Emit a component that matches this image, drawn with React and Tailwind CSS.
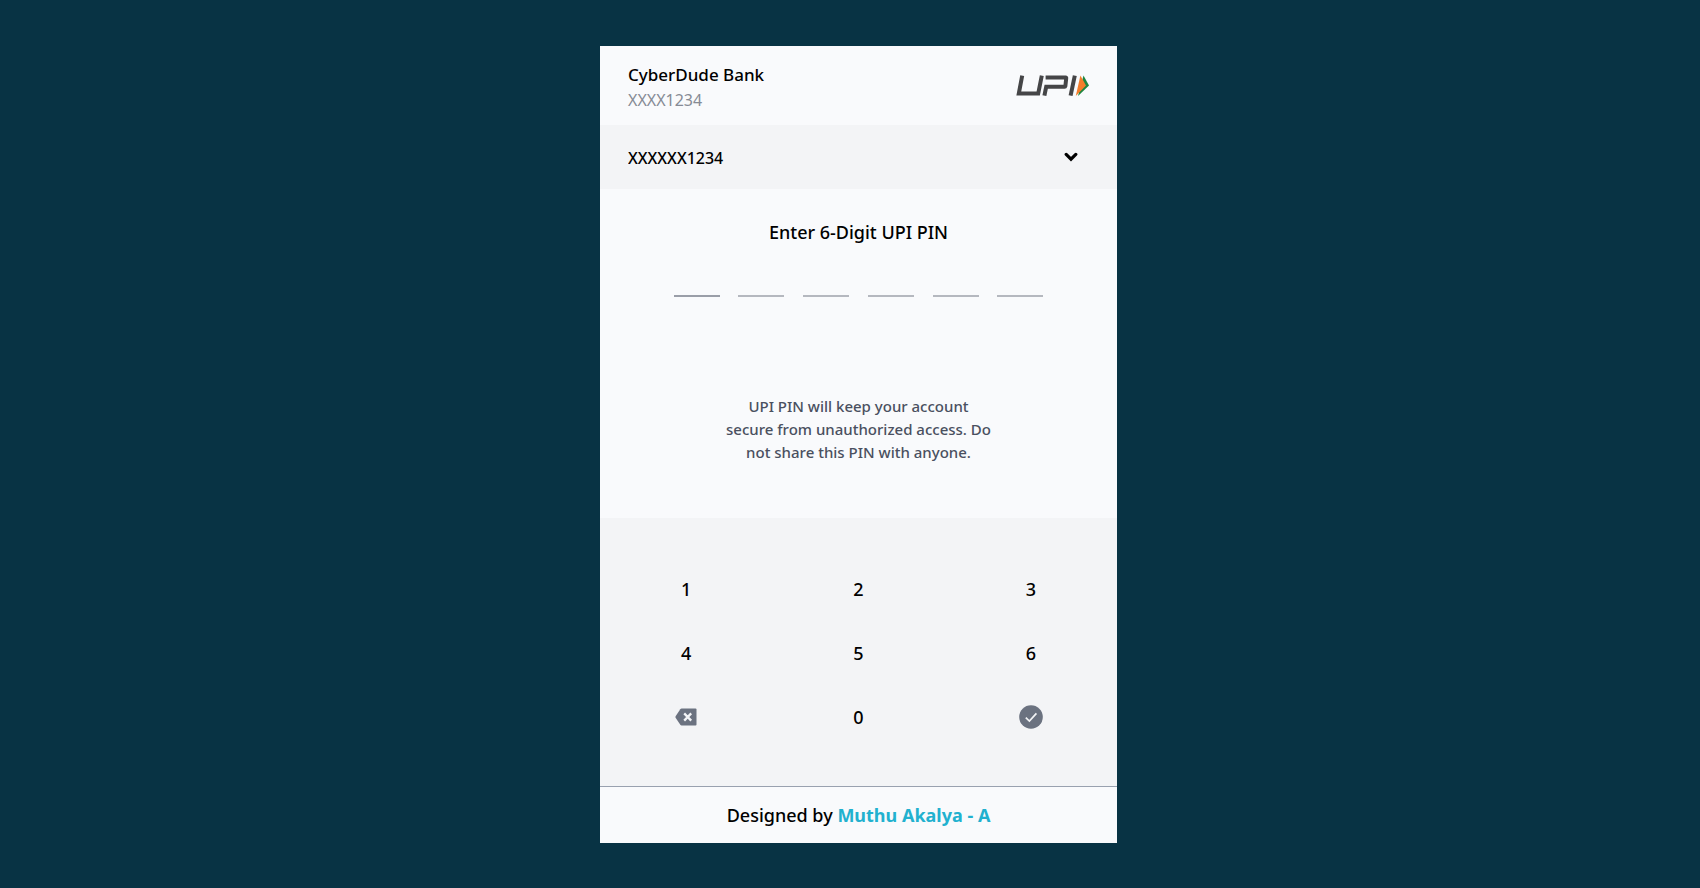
import React, { useState } from "react";

const DIGITS = ["1", "2", "3", "4", "5", "6"];

function UpiLogo() {
  return (
    <svg viewBox="0 0 74 24" className="mb-1 h-6 w-[74px]" role="img" aria-label="UPI">
      <g fill="none" stroke="#454547" strokeWidth="4">
        <path d="M7.2 1.6 L3.8 19.6 H23.2 L26.8 1.6" />
        <path d="M29.4 21.6 L31.2 12.8 H49.6 Q50.2 12.8 50.4 12 L51.2 4.4 Q51.4 3.6 50.6 3.6 H30.6" />
        <path d="M55.6 21.6 L59.8 1.6" />
      </g>
      <path d="M68.5 1.4 L74 11.4 L63 22 Z" fill="#1e8540" />
      <path d="M65.4 1.4 L71 11.4 L60.8 22 Z" fill="#f47d2b" />
    </svg>
  );
}

function BackspaceIcon() {
  return (
    <svg viewBox="0 0 22 18" className="h-[18px] w-[22px]" aria-hidden="true">
      <path
        d="M6.6 0.5 H20.5 Q21.5 0.5 21.5 1.5 V16.5 Q21.5 17.5 20.5 17.5 H6.6 Q5.8 17.5 5.3 16.8 L0.6 9.8 Q0.1 9 0.6 8.2 L5.3 1.2 Q5.8 0.5 6.6 0.5 Z"
        fill="#6b7280"
      />
      <path d="M9.2 5.4 L16.2 12.6 M16.2 5.4 L9.2 12.6" stroke="#f3f4f6" strokeWidth="2.3" />
    </svg>
  );
}

function SubmitIcon() {
  return (
    <svg viewBox="0 0 24 24" className="size-6" aria-hidden="true">
      <circle cx="12" cy="12" r="11.8" fill="#6b7280" />
      <path d="M6.8 12.6 L10.4 16 L17.4 8.4" fill="none" stroke="#f3f4f6" strokeWidth="1.7" />
    </svg>
  );
}

function Key({ label, onClick, children }) {
  return (
    <button type="button" aria-label={label} onClick={onClick} className="flex h-16 items-center justify-center">
      {children}
    </button>
  );
}

export default function App() {
  const [pin, setPin] = useState("");
  const press = (d) => setPin((p) => (p.length < 6 ? p + d : p));

  return (
    <div className="flex min-h-screen items-center justify-center bg-[#083344] pl-[17px] font-['Noto_Sans',sans-serif] text-lg leading-6 font-medium text-black">
      <main className="w-full max-w-[517px] bg-[#f9fafc]">
        <header className="flex items-center justify-between px-7 pt-[17px] pb-3">
          <div>
            <h1 className="text-[17px] leading-6">CyberDude Bank</h1>
            <p className="text-base leading-[26px] font-normal text-[#868b95]">XXXX1234</p>
          </div>
          <UpiLogo />
        </header>

        <div className="relative bg-gray-100">
          <select
            aria-label="Account"
            className="block h-16 w-full appearance-none bg-transparent px-7 pt-0.5 text-base outline-none"
          >
            <option>XXXXXX1234</option>
          </select>
          <svg
            viewBox="0 0 14 10"
            className="pointer-events-none absolute top-[27px] right-[39px] h-[10px] w-[14px]"
            aria-hidden="true"
          >
            <path d="M2.2 2.4 L7 7.2 L11.8 2.4" fill="none" stroke="#000" strokeWidth="3.2" strokeLinecap="round" />
          </svg>
        </div>

        <section className="flex flex-col items-center pt-[31px] pb-[54px]">
          <h2>Enter 6-Digit UPI PIN</h2>
          <div className="mt-[19px] flex w-[370px] justify-between">
            {DIGITS.map((d, i) => (
              <input
                key={d}
                type="password"
                aria-label={`PIN digit ${d}`}
                readOnly
                value={pin[i] || ""}
                className="h-[34px] w-[46px] border-b-2 border-[#b5b8bf] bg-transparent text-center outline-none first:border-[#9a9ea8]"
              />
            ))}
          </div>
          <p className="mt-[98px] max-w-[269px] text-center text-[15px] leading-[23px] text-[#4a5060]">
            UPI PIN will keep your account secure from unauthorized access. Do not share this PIN with anyone.
          </p>
        </section>

        <section className="grid grid-cols-3 bg-gray-100 pt-[39px] pb-[37px]">
          {DIGITS.map((d) => (
            <Key key={d} label={d} onClick={() => press(d)}>
              {d}
            </Key>
          ))}
          <Key label="Delete" onClick={() => setPin((p) => p.slice(0, -1))}>
            <BackspaceIcon />
          </Key>
          <Key label="0" onClick={() => press("0")}>
            0
          </Key>
          <Key label="Submit">
            <SubmitIcon />
          </Key>
        </section>

        <footer className="border-t border-gray-400 py-4 text-center">
          Designed by{" "}
          <a href="#" className="font-bold text-[#22b1cf]">
            Muthu Akalya - A
          </a>
        </footer>
      </main>
    </div>
  );
}
